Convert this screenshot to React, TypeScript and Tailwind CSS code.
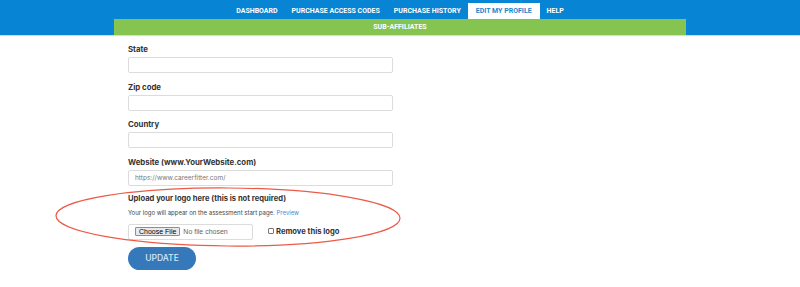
import React from "react";

const navItems = ["DASHBOARD", "PURCHASE ACCESS CODES", "PURCHASE HISTORY", "EDIT MY PROFILE", "HELP"];

function Field({ label, placeholder }: { label: string; placeholder?: string }) {
  return (
    <div className="flex flex-col">
      <label className="text-[7.8px] leading-[10px] font-bold text-[#333]">{label}</label>
      <input
        type="text"
        placeholder={placeholder}
        className="mt-[3px] h-[16px] w-[265px] rounded-[2px] border border-[#dcdcdc] bg-white px-[6px] text-[6.5px] text-[#555] placeholder:text-[#777] outline-none"
      />
    </div>
  );
}

export default function App() {
  return (
    <div className="relative min-h-[287px] w-[800px] bg-white" style={{ fontFamily: "Inter, 'Open Sans', sans-serif" }}>
      {/* header */}
      <div className="bg-[#0784d3] shadow-[0_1px_1px_rgba(0,0,0,0.15)]">
        <nav className="flex h-[19px] items-end justify-center" style={{ fontFamily: "Roboto, sans-serif" }}>
          {navItems.map((item) => (
            <a
              key={item}
              className={
                item === "EDIT MY PROFILE"
                  ? "flex h-[16px] items-center bg-white px-[8px] text-[7px] font-bold text-[#1a86cf]"
                  : "flex h-[16px] items-center px-[7px] text-[7px] font-bold text-white"
              }
            >
              {item}
            </a>
          ))}
        </nav>
        <div className="mx-auto flex h-[16px] w-[572px] items-center justify-center bg-[#86c451] text-[7px] font-bold text-white" style={{ fontFamily: "Roboto, sans-serif" }}>
          SUB-AFFILIATES
        </div>
      </div>

      {/* form */}
      <div className="mx-auto w-[572px] px-[14px] pt-[9px]">
        <div className="flex flex-col gap-[8.6px]">
          <Field label="State" />
          <Field label="Zip code" />
          <Field label="Country" />
          <Field label="Website (www.YourWebsite.com)" placeholder="https://www.careerfitter.com/" />
        </div>

        <div className="mt-[8px] text-[7.6px] leading-[10px] font-bold text-[#333]">Upload your logo here (this is not required)</div>
        <div className="mt-[5px] text-[6px] leading-[8px] text-[#444]">
          Your logo will appear on the assessment start page. <a className="text-[#3d8bd8]">Preview</a>
        </div>

        <div className="mt-[7px] flex items-start gap-[15px]">
          <div className="flex h-[16px] w-[125px] items-center rounded-[2px] border border-[#dcdcdc] px-[6px]" style={{ fontFamily: "'Liberation Sans', Arial, sans-serif" }}>
            <span className="flex h-[9px] items-center rounded-[1px] border border-[#8f8f8f] bg-[#e9e9e9] px-[3px] text-[7px] text-black">Choose File</span>
            <span className="ml-[3px] text-[7px] text-[#666]">No file chosen</span>
          </div>
          <label className="mt-[2px] flex items-center gap-[2px] text-[7.6px] font-bold text-[#333]">
            <span className="h-[6px] w-[6px] rounded-[1px] border border-[#777] bg-white" />
            Remove this logo
          </label>
        </div>

        <button className="mt-[7px] h-[23px] w-[68px] rounded-full bg-[#3579bb] text-[8.5px] font-medium text-[#dbe8f5]">UPDATE</button>
      </div>

      {/* red annotation ellipse */}
      <svg className="pointer-events-none absolute left-0 top-0" width="800" height="287">
        <ellipse cx="228" cy="217" rx="172" ry="29" fill="none" stroke="#ec5a48" strokeWidth="1.2" transform="rotate(0.4 228 217)" />
      </svg>
    </div>
  );
}
